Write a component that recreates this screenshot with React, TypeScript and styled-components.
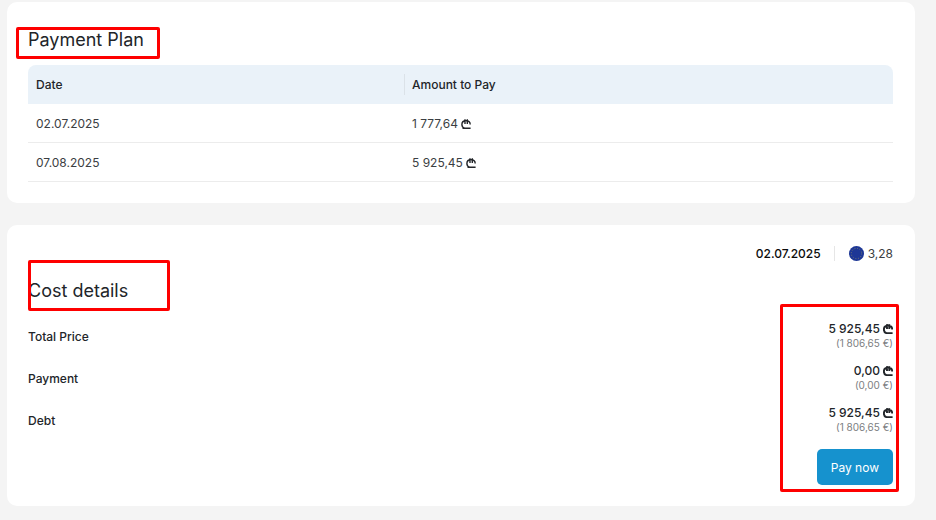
import React from "react";
import styled, { createGlobalStyle } from "styled-components";

const GlobalStyle = createGlobalStyle`
  *, *::before, *::after { box-sizing: border-box; }
  body {
    margin: 0;
    background: #f4f4f4;
    color: #222529;
    font-family: "Inter", "Roboto", sans-serif;
    font-size: 12px;
  }
`;

const Page = styled.main`
  display: flex;
  flex-direction: column;
  gap: 22px;
  padding: 2px 21px 14px 7px;
`;

const Card = styled.section`
  padding: 21px 22px 21px 21px;
  border-radius: 10px;
  background: #fff;
`;

const Title = styled.h2`
  position: relative;
  width: fit-content;
  margin: 0;
  font-size: 18px;
  font-weight: 400;
  line-height: 34px;
`;

const Highlight = styled.span<{ $inset: string; $width: number }>`
  position: absolute;
  inset: ${(p) => p.$inset};
  width: ${(p) => p.$width}px;
  border: 3px solid #fe0000;
  border-radius: 2px;
  pointer-events: none;
`;

const Table = styled.table`
  width: 100%;
  margin-top: 8px;
  border-collapse: separate;
  border-spacing: 0;
  table-layout: fixed;
`;

const HeadCell = styled.th<{ $wide?: boolean }>`
  width: ${(p) => (p.$wide ? "auto" : "376px")};
  height: 39px;
  padding: 0;
  background: #eaf2f9;
  font-weight: 500;
  text-align: left;

  &:first-child { border-top-left-radius: 8px; }
  &:last-child { border-top-right-radius: 8px; }
`;

const HeadLabel = styled.div<{ $divided?: boolean }>`
  padding-left: 7px;
  border-left: 1px solid ${(p) => (p.$divided ? "#dbe2e8" : "transparent")};
  line-height: 21px;
`;

const Cell = styled.td`
  height: 39px;
  padding: 0 8px;
  border-bottom: 1px solid #ececec;
  color: #3b3e42;
`;

const LariIcon = styled.svg<{ $bold?: boolean }>`
  width: 10px;
  height: 10px;
  margin-left: 3px;
  vertical-align: -1px;
  fill: none;
  stroke: #222529;
  stroke-width: ${(p) => (p.$bold ? 1.9 : 1.4)};
`;

const RateBar = styled.div`
  display: flex;
  align-items: center;
  justify-content: flex-end;
  height: 15px;
`;

const RateDate = styled.time`
  padding-right: 13px;
  border-right: 1px solid #e6e6e6;
  color: #0b0b0b;
  font-weight: 500;
  line-height: 15px;
`;

const Rate = styled.span`
  display: flex;
  align-items: center;
  gap: 4px;
  padding-left: 14px;
  color: #3b3e42;
`;

const CostHead = styled.div`
  padding: 13px 0;
`;

const Summary = styled.div`
  position: relative;
  display: flex;
  flex-direction: column;
`;

const CostList = styled.dl`
  display: flex;
  flex-direction: column;
  gap: 12px;
  margin: 0 0 14px;
`;

const CostRow = styled.div`
  display: flex;
  align-items: center;
  justify-content: space-between;
  line-height: 15px;
`;

const CostLabel = styled.dt`
  font-weight: 500;
`;

const CostValue = styled.dd`
  margin: 0;
  text-align: right;
`;

const Main = styled.div`
  font-weight: 500;
`;

const Converted = styled.div`
  color: #7c7e81;
  font-size: 10px;
`;

const PayButton = styled.button`
  align-self: flex-end;
  height: 36px;
  padding: 0 14px;
  border: 0;
  border-radius: 5px;
  background: #1692ce;
  color: #fff;
  font: 400 12px "Inter", "Roboto", sans-serif;
  cursor: pointer;
`;

const Lari = ({ bold }: { bold?: boolean }) => (
  <LariIcon $bold={bold} viewBox="0 0 10 10" role="img" aria-label="GEL">
    <path d="M9.2 5.600C9.2 3.200 7.500 1.800 5 1.800C2.500 1.800 .9 3.300 .9 5.500C.9 7.400 2 8.800 3.500 9.200M1.500 9.200H9.600M4 .2V5M6.300 .2V5" />
  </LariIcon>
);

const EuFlag = () => (
  <svg width="15" height="15" viewBox="0 0 15 15" aria-hidden="true">
    <circle cx="7.500" cy="7.500" r="7.500" fill="#1d3796" />
    <circle
      cx="7.500"
      cy="7.500"
      r="5.200"
      fill="none"
      stroke="#7d7f6c"
      strokeWidth="0.9"
      strokeDasharray="1 1.720"
    />
  </svg>
);

const payments = [
  { date: "02.07.2025", amount: "1 777,64" },
  { date: "07.08.2025", amount: "5 925,45" },
];

const costs = [
  { label: "Total Price", amount: "5 925,45", euro: "(1 806,65 €)" },
  { label: "Payment", amount: "0,00", euro: "(0,00 €)" },
  { label: "Debt", amount: "5 925,45", euro: "(1 806,65 €)" },
];

export default function App() {
  return (
    <>
      <GlobalStyle />
      <Page>
        <Card>
          <Title>
            Payment Plan
            <Highlight $inset="4px auto -2px -12px" $width={144} />
          </Title>
          <Table>
            <thead>
              <tr>
                <HeadCell scope="col">
                  <HeadLabel>Date</HeadLabel>
                </HeadCell>
                <HeadCell scope="col" $wide>
                  <HeadLabel $divided>Amount to Pay</HeadLabel>
                </HeadCell>
              </tr>
            </thead>
            <tbody>
              {payments.map((p) => (
                <tr key={p.date}>
                  <Cell>{p.date}</Cell>
                  <Cell>
                    {p.amount}
                    <Lari />
                  </Cell>
                </tr>
              ))}
            </tbody>
          </Table>
        </Card>
        <Card>
          <RateBar>
            <RateDate dateTime="2025-07-02">02.07.2025</RateDate>
            <Rate>
              <EuFlag />
              3,28
            </Rate>
          </RateBar>
          <CostHead>
            <Title>
              Cost details
              <Highlight $inset="-14px auto -3px 0" $width={142} />
            </Title>
          </CostHead>
          <Summary>
            <CostList>
              {costs.map((c) => (
                <CostRow key={c.label}>
                  <CostLabel>{c.label}</CostLabel>
                  <CostValue>
                    <Main>
                      {c.amount}
                      <Lari bold />
                    </Main>
                    <Converted>{c.euro}</Converted>
                  </CostValue>
                </CostRow>
              ))}
            </CostList>
            <PayButton type="button">Pay now</PayButton>
            <Highlight $inset="-17px -6px -7px auto" $width={119} />
          </Summary>
        </Card>
      </Page>
    </>
  );
}
